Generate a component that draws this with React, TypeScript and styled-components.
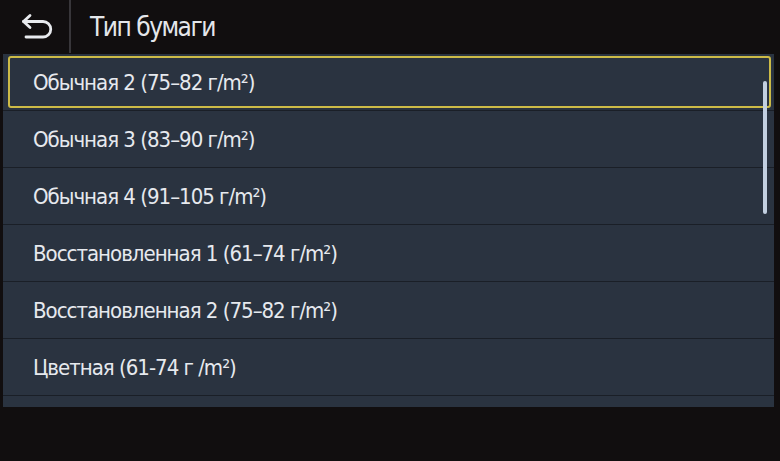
import * as React from 'react';
import styled, { createGlobalStyle } from 'styled-components';

const GlobalStyle = createGlobalStyle`
  html, body {
    margin: 0;
    padding: 0;
    background: #110e0f;
  }
  body {
    font-family: "Liberation Sans Narrow", "DejaVu Sans Condensed", "Roboto", sans-serif;
    font-stretch: condensed;
  }
`;

const Screen = styled.div`
  width: 780px;
  height: 461px;
  display: flex;
  flex-direction: column;
  background: #110e0f;
  overflow: hidden;
`;

const Header = styled.div`
  height: 54px;
  display: flex;
  align-items: stretch;
  flex: none;
`;

const BackButton = styled.div`
  width: 71px;
  display: flex;
  align-items: center;
  justify-content: center;
  padding-left: 4px;
  padding-bottom: 1px;
  box-sizing: border-box;
  border-right: 2px solid #38363a;
  margin-bottom: 1px;
`;

const Title = styled.div`
  display: flex;
  align-items: center;
  padding-left: 19px;
  padding-bottom: 1px;
  color: #e4e6ea;
  font-size: 26px;
  letter-spacing: -1.5px;
`;

const List = styled.div`
  position: relative;
  margin: 0 6px 0 3px;
  height: 353px;
  background: #2a3340;
  flex: none;
  overflow: hidden;
`;

const Row = styled.div`
  height: 57px;
  box-sizing: border-box;
  border-bottom: 1px solid #1a1f27;
  display: flex;
  align-items: stretch;
  padding: 2px 3px 2px 5px;
`;

const RowInner = styled.div<{ $selected?: boolean }>`
  flex: 1;
  display: flex;
  align-items: center;
  padding-left: 23px;
  border: 2px solid ${(p) => (p.$selected ? '#cdbb47' : 'transparent')};
  border-radius: 3px;
  color: #e6e9ee;
  font-size: 22px;
  letter-spacing: -1px;
`;

const ScrollThumb = styled.div`
  position: absolute;
  left: 760px;
  top: 27px;
  width: 4px;
  height: 133px;
  border-radius: 2px;
  background: #c2cfe0;
`;

const BackIcon = () => (
  <svg width="34" height="28" viewBox="0 0 34 28" fill="none">
    <path
      d="M10 3.5 3.5 9.5 10 15.5"
      stroke="#e8eaee"
      strokeWidth="2.8"
      strokeLinecap="round"
      strokeLinejoin="round"
    />
    <path
      d="M3.5 9.5h19.5a7.75 7.75 0 0 1 0 15.5H6"
      stroke="#e8eaee"
      strokeWidth="2.8"
      strokeLinecap="round"
    />
  </svg>
);

const items = [
  'Обычная 2 (75–82 г/m²)',
  'Обычная 3 (83–90 г/m²)',
  'Обычная 4 (91–105 г/m²)',
  'Восстановленная 1 (61–74 г/m²)',
  'Восстановленная 2 (75–82 г/m²)',
  'Цветная (61-74 г /m²)',
  '',
];

export default function App() {
  return (
    <Screen>
      <GlobalStyle />
      <Header>
        <BackButton>
          <BackIcon />
        </BackButton>
        <Title>Тип бумаги</Title>
      </Header>
      <List>
        {items.map((label, idx) => (
          <Row key={idx}>
            <RowInner $selected={idx === 0}>{label}</RowInner>
          </Row>
        ))}
        <ScrollThumb />
      </List>
    </Screen>
  );
}
